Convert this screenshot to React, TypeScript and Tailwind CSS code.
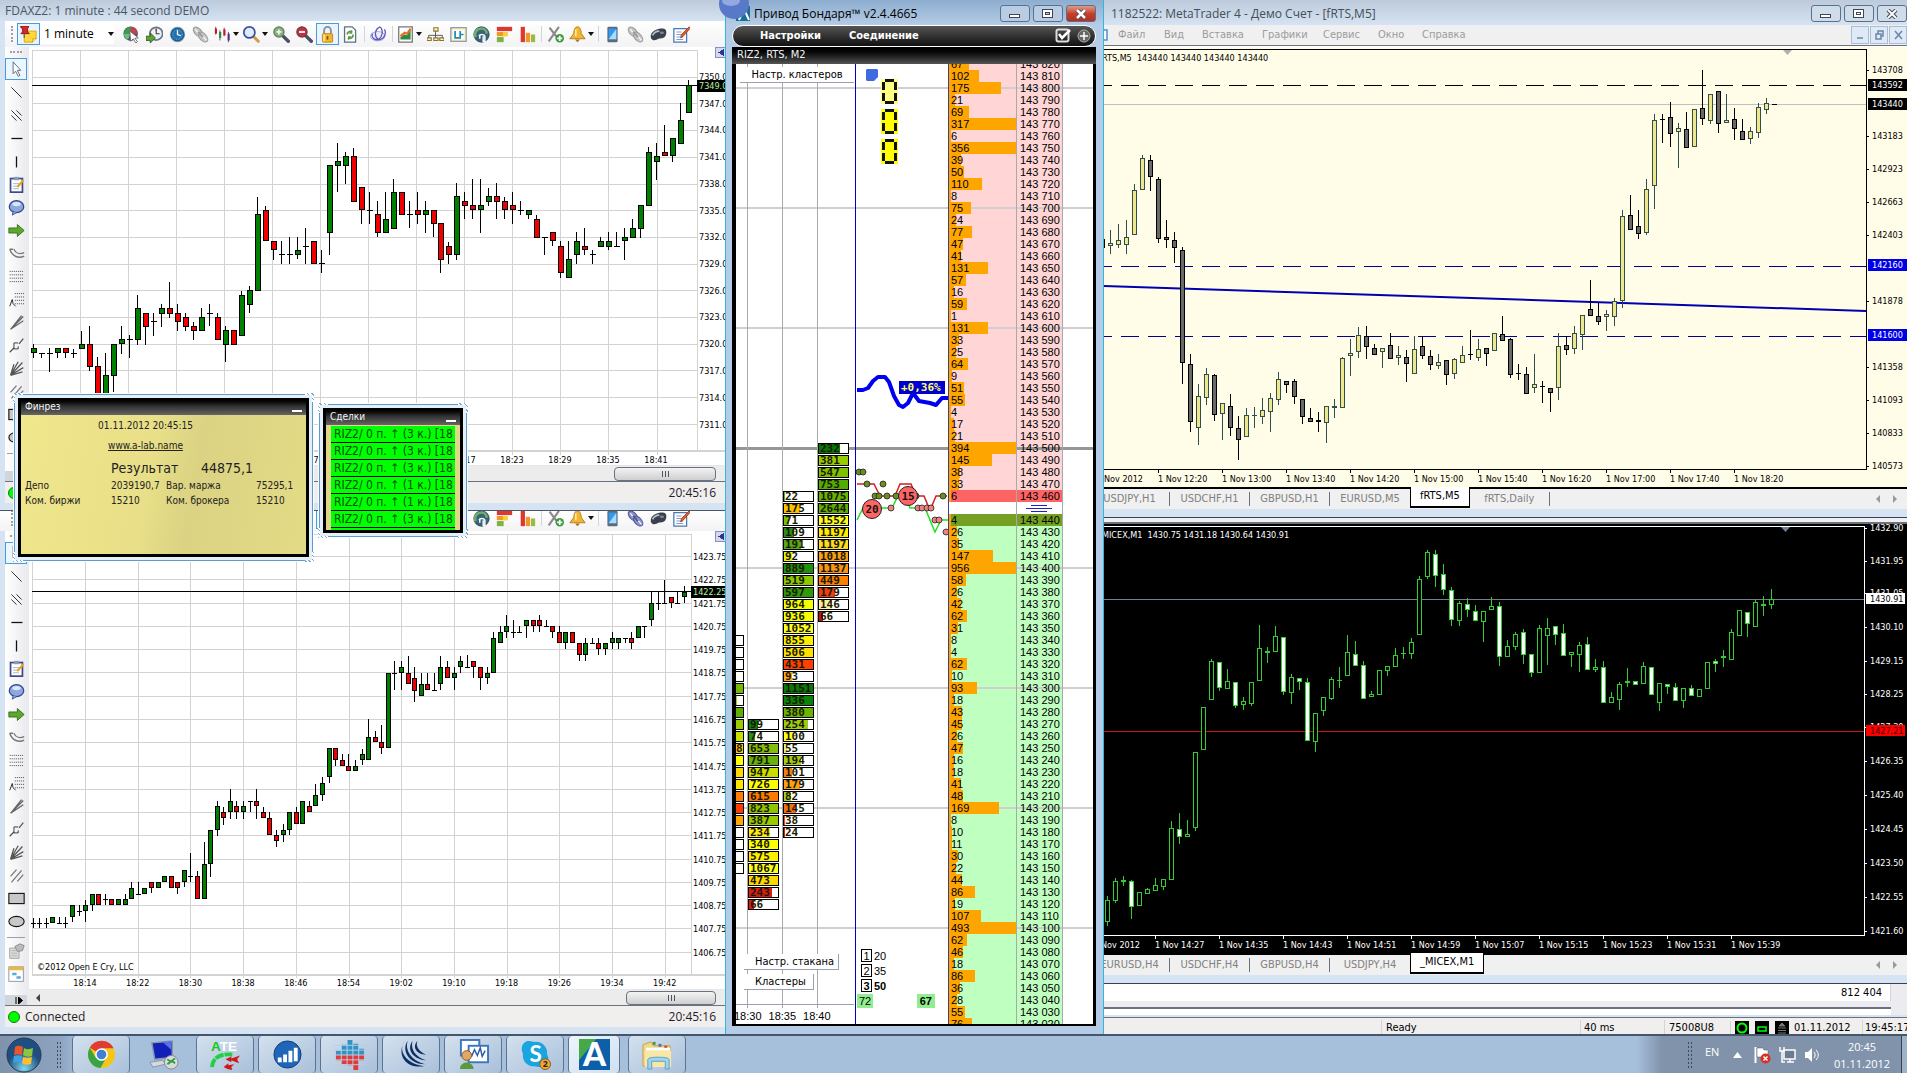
import React from 'react';

const TAHOMA = "font-['DejaVu_Sans_Condensed','Liberation_Sans',sans-serif]";
const SEGOE = "font-['Open_Sans','Noto_Sans',sans-serif]";

/* ---------- chart data: "kind high top bottom low" ---------- */

const daxCandles = `g 344 348 353 358,k 353 353 353 358,k 348 353 353 372,g 348 348 353 358,r 348 348 353 358,k 349 353 353 358,g 331 344 349 349,r 326 344 367 371,r 357 366 399 399,g 353 375 395 399,g 344 344 376 392,g 326 339 344 354,k 335 339 339 358,g 295 308 340 345,r 313 313 327 345,k 313 321 321 336,g 304 308 314 327,r 282 308 314 318,r 304 313 322 331,r 313 317 327 331,r 322 326 331 340,g 308 317 331 331,k 304 313 313 326,r 313 317 340 340,g 326 330 345 362,r 330 330 345 345,g 291 295 336 336,g 286 290 305 313,g 197 214 291 291,r 206 210 241 241,r 241 241 250 260,k 241 254 254 264,k 237 254 254 264,g 237 250 255 259,k 228 246 246 264,r 241 241 264 264,k 250 263 263 273,g 165 165 233 255,g 143 161 166 192,g 152 156 166 184,r 148 156 202 202,r 187 187 210 224,k 192 210 210 224,r 201 214 233 237,g 192 219 233 233,g 179 192 229 229,r 192 192 215 215,k 201 214 214 228,r 192 210 215 224,g 201 210 215 233,r 210 210 224 237,r 223 223 260 273,r 242 246 255 264,g 183 196 255 260,r 192 201 206 219,r 179 205 210 219,g 179 205 210 233,g 188 196 202 206,r 183 196 202 219,r 197 201 210 219,r 192 205 210 224,k 201 210 210 215,g 210 210 215 219,r 215 219 238 238,k 237 237 237 255,r 232 232 241 246,r 241 246 273 278,g 241 259 278 278,g 232 241 255 264,r 228 246 250 255,k 250 254 254 264,g 237 241 247 247,g 232 241 247 250,k 232 246 246 246,g 228 237 241 260,g 219 228 238 238,g 205 205 229 238,g 147 152 206 206,g 143 156 162 180,r 125 152 156 156,g 138 138 156 162,g 103 120 144 144,g 80 85 113 113`;

const spCandles = `k 918 923 923 928,k 918 923 923 928,k 918 923 923 928,g 917 917 923 923,k 917 923 923 923,k 917 923 923 928,g 905 905 917 922,k 905 911 911 916,g 900 905 911 922,g 894 894 905 911,r 894 894 905 905,k 894 899 899 905,r 899 899 905 905,g 899 899 905 905,g 894 899 905 905,g 882 888 899 899,k 882 894 894 894,g 888 888 894 894,r 882 882 888 893,g 882 882 888 888,g 876 876 882 882,r 876 876 888 888,r 882 882 888 894,g 870 870 882 887,k 853 876 876 882,r 871 876 899 899,g 842 864 899 899,g 830 830 864 877,g 801 806 830 836,r 807 812 818 825,g 789 801 812 819,r 801 806 812 819,g 801 806 812 819,k 801 801 801 812,r 789 801 806 819,r 807 812 818 818,r 812 818 835 835,r 830 835 841 847,g 824 830 835 842,g 812 812 830 835,r 807 812 824 824,g 801 801 824 824,r 801 806 812 812,g 784 795 806 806,g 777 783 795 801,g 748 748 777 783,r 748 748 760 766,r 754 760 766 766,r 754 766 771 771,g 760 766 771 771,g 749 754 760 765,g 719 737 760 760,r 731 737 742 742,r 725 742 748 754,g 673 673 748 748,k 661 673 673 690,g 661 667 673 690,r 656 673 684 684,r 667 678 691 702,g 673 684 696 696,r 673 684 690 690,k 673 690 690 690,g 656 667 684 690,r 661 667 678 678,g 667 673 678 690,g 656 661 667 673,k 655 667 667 667,r 661 661 667 678,r 667 667 678 690,g 667 673 678 684,g 632 638 673 673,g 626 632 643 643,g 615 626 632 638,k 620 632 632 638,k 626 632 632 632,g 620 620 626 638,r 620 620 626 632,r 615 620 626 632,k 620 626 626 626,r 626 626 632 638,r 626 632 643 643,g 632 632 643 649,r 632 632 643 643,r 643 643 655 661,g 638 643 655 661,k 638 643 643 643,r 638 643 649 655,g 643 643 649 655,g 632 638 643 649,g 638 638 643 649,k 638 638 638 643,r 632 638 643 649,g 626 626 638 638,k 626 626 626 638,g 592 603 620 626,k 592 603 603 610,k 580 603 603 603,r 597 597 603 608,k 592 603 603 603,g 586 592 597 603`;

const rtsCandles = `u 230 243 246 254,u 224 240 245 248,u 220 237 245 254,u 184 190 235 235,u 155 158 190 190,d 155 160 177 191,d 177 179 239 243,d 220 237 240 248,d 232 240 248 263,d 247 250 363 384,d 354 364 422 432,u 384 396 428 445,u 368 374 398 405,d 374 375 415 421,u 403 403 414 440,d 394 406 428 436,d 416 428 440 460,u 408 415 437 437,u 407 415 416 428,u 398 410 417 424,u 393 398 412 432,u 372 379 400 405,d 381 381 385 393,d 379 381 397 404,d 399 399 417 424,d 408 418 422 422,d 412 420 422 432,u 406 406 423 443,u 399 406 408 418,u 357 358 408 408,u 339 353 356 376,u 327 335 352 358,d 326 336 347 359,d 344 348 355 355,u 348 348 352 368,d 333 345 359 359,u 346 355 358 365,d 350 357 364 382,u 336 349 374 374,d 336 346 356 359,d 350 356 365 370,u 354 362 366 369,d 360 360 375 385,u 358 359 374 379,u 346 355 363 363,d 330 354 355 360,u 339 349 358 361,d 348 348 354 366,u 333 333 351 351,d 316 334 341 341,d 338 339 375 378,d 364 373 374 380,d 367 374 394 394,u 354 384 388 393,d 381 386 387 403,d 388 388 393 412,u 333 346 388 400,d 336 345 350 355,u 326 333 349 354,u 315 315 335 350,d 280 309 316 316,d 303 316 322 325,u 310 314 317 331,u 298 301 317 326,u 210 216 301 308,d 195 215 230 230,d 210 226 234 239,u 179 189 233 235,u 114 120 186 209,d 114 119 120 143,d 102 117 134 147,u 123 128 132 168,d 112 129 148 148,u 109 109 147 147,d 70 108 119 125,u 94 94 121 124,d 91 91 124 133,u 94 120 123 123,d 108 119 129 140,d 119 131 140 140,u 127 131 139 144,u 103 107 133 138,u 98 103 110 114`;

const micexCandles = `h 896 900 922 926,h 878 881 901 903,l 876 880 882 886,w 880 881 907 919,h 892 892 906 906,h 888 889 894 894,h 878 885 891 891,h 879 879 887 890,h 821 828 880 880,w 813 829 837 844,h 820 834 837 837,h 752 752 828 831,h 707 707 750 750,h 659 661 700 700,w 662 662 688 691,h 669 681 689 689,w 682 682 706 708,h 697 701 705 710,h 682 682 704 706,h 625 648 681 681,l 647 651 653 663,h 626 636 652 652,w 637 637 692 695,h 674 677 693 704,w 678 678 682 690,w 678 682 741 741,h 713 713 742 752,h 697 697 711 716,h 677 679 699 700,l 667 680 681 688,h 635 652 676 676,w 641 654 666 666,w 661 665 699 699,h 691 694 697 697,h 670 670 695 695,h 666 666 671 676,h 648 655 667 667,l 647 653 654 659,h 638 642 654 659,h 576 579 635 635,h 550 552 577 579,w 550 554 576 587,w 564 574 590 595,w 587 590 620 626,h 601 603 621 626,w 598 604 610 617,w 605 611 621 621,h 611 611 622 642,h 597 606 610 610,w 602 606 657 666,h 640 646 657 657,h 632 634 647 650,w 629 632 655 664,w 654 654 673 677,h 625 628 673 673,h 618 628 636 665,w 626 626 635 645,w 624 633 656 656,h 652 652 655 667,h 642 645 655 672,w 637 644 670 670,h 659 667 670 672,w 661 667 703 703,h 692 697 703 703,h 682 684 700 710,l 668 681 683 687,w 681 681 685 685,h 662 666 684 684,w 667 667 695 695,h 683 683 703 711,w 684 684 687 694,w 683 687 701 701,h 688 688 701 708,w 685 688 696 696,h 689 689 697 697,h 662 662 689 689,w 659 661 664 672,l 650 656 658 667,h 629 632 660 660,h 610 610 636 636,w 612 612 624 637,h 600 602 627 627,l 596 604 606 616,h 589 599 605 609`;

const palette: Record<string, { fill: string; line: string }> = {
    g: { fill: '#008000', line: '#000' },
    r: { fill: '#f00000', line: '#000' },
    k: { fill: '#000', line: '#000' },
    u: { fill: '#f0e68c', line: '#2f4f4f' },
    d: { fill: '#696969', line: '#000' },
    h: { fill: '#000', line: '#32cd32' },
    w: { fill: '#fff', line: '#32cd32' },
    l: { fill: '#00ff00', line: '#32cd32' },
};

const Candles: React.FC<{ data: string; x0: number; step: number; width: number }> = ({ data, x0, step, width }) => (
    <g strokeWidth={1}>
        {data.split(',').map((row, i) => {
            const [kind, ...nums] = row.split(' ');
            const [high, top, bottom, low] = nums.map(Number);
            const x = Math.round(x0 + step * i) + 0.5;
            const c = palette[kind];
            return (
                <g key={i} stroke={c.line}>
                    <line x1={x} x2={x} y1={high} y2={low} />
                    <rect x={x - width / 2} y={top + 0.5} width={width} height={Math.max(bottom - top - 1, 0.01)} fill={c.fill} />
                </g>
            );
        })}
    </g>
);

/* ---------- toolbar icons ---------- */

const Svg: React.FC<{ children: React.ReactNode; size?: number }> = ({ children, size = 17 }) => (
    <svg width={size} height={size} viewBox="0 0 20 20" fill="none" className="shrink-0">{children}</svg>
);

const chain = (fill: string, stroke: string) => (
    <g fill={fill} stroke={stroke} strokeWidth="1.2">
        <ellipse cx="7" cy="7" rx="7" ry="4" transform="rotate(48 7 7)" />
        <ellipse cx="13" cy="13" rx="7" ry="4" transform="rotate(48 13 13)" />
        <path d="M4 4l4 5M12 11l5 6" stroke="#fff" />
        <path d="M7 7l6 6" strokeWidth="2" />
    </g>
);

const toolIcons: Record<string, React.ReactNode> = {
    note: <><path d="M5 6h14v9l-4 4H5z" fill="#ffd93b" stroke="#d9a400" /><path d="M15 19v-4h4" fill="#fff3a8" stroke="#c99700" /><path d="M1 0h9v2L9 3v4l2 2H1l2-2V3L1 2z" fill="#d8262a" stroke="#7e1113" /><path d="M5 9v5" stroke="#666" strokeWidth="1.500" /></>,
    pie: <><circle cx="9" cy="9" r="8.500" fill="#4a4f78" /><path d="M9 9V1a8 8 0 0 1 8 8z" fill="#c8404a" /><path d="M9 9H1a8 8 0 0 1 8-8z" fill="#3f9a52" /><path d="M9 9H1a8 8 0 0 0 5 7z" fill="#6cc070" /><path d="M8 6l10 8-4 .5 3 4-2 1.500-3-5-3 3z" fill="#fff" stroke="#666" /></>,
    clockIn: <><circle cx="12" cy="9" r="7.500" fill="#eef2f6" stroke="#66788c" strokeWidth="2" /><path d="M12 3v6h4" stroke="#333" strokeWidth="1.200" /><path d="M12 4v2" stroke="#c33" strokeWidth="2" /><path d="M0 12h5V8l6 6-6 6v-3H0z" fill="#5f9f3a" stroke="#2c5a12" /></>,
    clock: <><circle cx="10" cy="10" r="9" fill="#7d9cb8" /><circle cx="10" cy="10" r="7.500" fill="#1f72ae" stroke="#1b4e78" /><circle cx="10" cy="10" r="5.500" stroke="#9fc8e6" strokeDasharray="1 2" /><path d="M10 5v5l4 1.500" stroke="#fff" strokeWidth="1.500" /></>,
    link: chain('#c6c6c6', '#9a9a9a'),
    linkBlue: chain('#8c94c8', '#4c5498'),
    candles: <><path d="M2 1v9M7 5v12M12 2v10M17 7v12" stroke="#444" /><path d="M1 3h2.500v6H1z" fill="#d0102a" /><path d="M6 7h2.500v7H6z" fill="#1d8a3c" /><path d="M11 4h2.500v7H11z" fill="#d0102a" /><path d="M16 9h2.500v8H16z" fill="#5a2a90" /></>,
    zoom: <><path d="M12 12l6 6" stroke="#d29a3c" strokeWidth="3.500" strokeLinecap="round" /><circle cx="7.500" cy="7.500" r="6.500" fill="#dcecfb" stroke="#3a4fa0" strokeWidth="2" /></>,
    zoomIn: <><path d="M11 11l7 7" stroke="#4a4f62" strokeWidth="4" strokeLinecap="round" /><circle cx="7" cy="7" r="6" fill="#86b47e" stroke="#6a7a6a" strokeWidth="1.500" /><path d="M4 7h6M7 4v6" stroke="#e8f5e4" strokeWidth="2" /></>,
    zoomOut: <><path d="M11 11l7 7" stroke="#4a4f62" strokeWidth="4" strokeLinecap="round" /><circle cx="7" cy="7" r="6" fill="#c03040" stroke="#7a3a44" strokeWidth="1.500" /><path d="M3.500 7h7" stroke="#fbe4e4" strokeWidth="2.500" /></>,
    lock: <><path d="M6 9V5a4 4 0 0 1 8 0v4" stroke="#8a8fa0" strokeWidth="2.200" /><rect x="4" y="9" width="12" height="10" rx="1" fill="#f7b52c" stroke="#b97b12" /><path d="M6 10v8" stroke="#ffe59a" strokeWidth="2" /><path d="M10 12v4" stroke="#7a5208" strokeWidth="2" /></>,
    refresh: <><path d="M3 1h9l4 4v14H3z" fill="#fff" stroke="#5c7088" strokeWidth="1.500" /><path d="M6 10a4 4 0 0 1 6-3M13 10a4 4 0 0 1-6 4" stroke="#5a9a3a" strokeWidth="2" /><path d="M12 4v5H8zM7 17v-5h4z" fill="#5a9a3a" /></>,
    swirl: <><ellipse cx="9" cy="12" rx="8.500" ry="5.500" fill="#ececfa" stroke="#9a9ad8" /><path d="M12 1C6 3 4 12 10 16M12 1c4 4 3 11-2 15M17 4c3 5-1 12-7 12M3 9c-2 4 2 8 7 7" stroke="#5a5ab8" strokeWidth="1.500" /></>,
    report: <><path d="M2 1h16v18H2z" fill="#fff" stroke="#777" strokeWidth="1.500" /><path d="M4 16v-3l5-3 3 1 4-8v13z" fill="#2f8a3c" /><path d="M4 12l5-4 3 1 4-6" stroke="#e0702a" strokeWidth="2.500" /></>,
    tree: <><path d="M10 6v8M2 14v-3h16v3" stroke="#444" /><path d="M8 2h5v4H8zM0 14h5v3H0zM8 14h5v3H8zM15 14h5v3h-5z" fill="#fff3c8" stroke="#8a7430" strokeWidth="1.300" /></>,
    layout: <><rect x="1" y="2" width="18" height="16" fill="#fff3c0" stroke="#8a98ac" strokeWidth="1.500" /><path d="M3.500 5v10h13V5z" fill="#fff" /><path d="M6 6v8h6V6M12 10h4" stroke="#1f88b8" strokeWidth="2" /></>,
    headset: <><circle cx="10" cy="10" r="9" fill="#37647a" stroke="#26405f" /><path d="M3 13c-2-6 2-10 7-10 4 0 6 3 6 6" stroke="#6fae6a" strokeWidth="3" /><path d="M7 12a4 4 0 0 1 7 0v6h-2v-6M8 10v5" stroke="#fff" strokeWidth="1.700" /></>,
    barsH: <><path d="M1 1h18v5H1z" fill="#dc3830" /><path d="M1 7h12v5H1z" fill="#f0962a" /><path d="M8 7h6v5H8z" fill="#f4d03c" /><path d="M1 13h8v6H1z" fill="#7cb342" /></>,
    barsV: <><path d="M2 1h5v18H2z" fill="#dc3830" /><path d="M8 8h5v11H8z" fill="#f0962a" /><path d="M14 10h5v9h-5z" fill="#9cba3c" /></>,
    tools: <><path d="M3 2l10 13M14 1L2 18" stroke="#8a8a8a" strokeWidth="2.500" /><circle cx="15" cy="14.500" r="5" fill="#3a9a3a" /><path d="M12 14.500h6M15 11.500v6" stroke="#fff" strokeWidth="2" /></>,
    bell: <><path d="M10 1c3 0 4 3 4.500 8l4.500 6H1l4.500-6C6 4 7 1 10 1z" fill="#f7b52c" stroke="#a8741a" /><path d="M8 4v8" stroke="#ffe7a8" strokeWidth="2" /><path d="M7 16h6l-3 3z" fill="#a8741a" /></>,
    phone: <><rect x="4" y="1" width="12" height="18" rx="1.500" fill="#5c6a7c" /><path d="M5.500 3h9v12.500h-9z" fill="#2f9af0" /><path d="M5.500 15.500l9-12v12z" fill="#a8dcff" /></>,
    mask: <><path d="M1 14C0 6 8 3 15 3c5 0 5 6 3 9-2 3-5 2-8 3-3 2-7 3-9-1z" fill="#3a414c" /><path d="M3 11c2-4 5-5 8-5" stroke="#b8c2ce" strokeWidth="2" /><ellipse cx="14" cy="8" rx="2.500" ry="1.500" fill="#7a8696" /></>,
    edit: <><path d="M1 3h15v16H1z" fill="#fff" stroke="#4a78b0" strokeWidth="1.500" /><path d="M4 7h6M4 10h7M4 13h8M4 16h8" stroke="#7f9cc8" strokeWidth="1.200" /><path d="M19 1l-9 9-1 4 3-2 8-9z" fill="#e85a2a" stroke="#a04018" /></>,
};

// '|' is a separator, '*' marks a pressed button, '+' adds a drop-down arrow
const toolLayout = ['pie', 'clockIn', 'clock', 'link', 'candles+', 'zoom+', 'zoomIn', 'zoomOut', 'lock*', 'refresh', '|', 'swirl', '|', 'report+', 'tree', 'layout', 'headset', 'barsH', 'barsV', '|', 'tools', 'bell+', '|', 'phone', 'link', 'mask', 'edit'];

const Caret = () => <svg width="6" height="4" className="ml-0.5 shrink-0"><path d="M0 0h6L3 4z" fill="#111" /></svg>;

const Toolbar: React.FC<{ linked?: boolean }> = ({ linked }) => (
    <div className="flex h-[26px] shrink-0 items-center pl-1.5">
        <span className="mr-1 h-4 border-l-2 border-dotted border-gray-400" />
        <button aria-label="note" className="flex h-[22px] w-[23px] items-center justify-center border border-[#4a9ae0] bg-[#eaf4fd]"><Svg>{toolIcons.note}</Svg></button>
        <label className="flex h-5 w-[74px] items-center justify-between bg-white pl-1">
            <select aria-label="interval" className={`appearance-none bg-transparent text-[12px] outline-none ${SEGOE}`}><option>1 minute</option></select>
            <Caret />
        </label>
        <div className="ml-1.5 flex items-center">
            {toolLayout.map((item, i) => {
                if (item === '|') return <span key={i} className="mx-0.5 h-4 w-px bg-gray-300" />;
                const name = item.replace(/[*+]/, '');
                const icon = linked && name === 'link' && i > 20 ? 'linkBlue' : name;
                return (
                    <button key={i} aria-label={name} className={`flex h-[22px] items-center justify-center ${item.endsWith('*') ? 'w-[23px] border border-[#4a9ae0] bg-[#eaf4fd]' : item.endsWith('+') ? 'w-[29px]' : 'w-[23px]'}`}>
                        <Svg>{toolIcons[icon]}</Svg>
                        {item.endsWith('+') && <Caret />}
                    </button>
                );
            })}
        </div>
    </div>
);

const sideIcons: [string, React.ReactNode][] = [
    ['cursor', <path d="M6 1v14l3-3 3 6 2-1-3-6h4z" fill="#fff" stroke="#4a5a70" />],
    ['line', <path d="M4 4l12 12" stroke="#111" />],
    ['channel', <path d="M4 4l12 12M10 4l6 6M4 10l6 6" stroke="#111" />],
    ['horizontal', <path d="M4 10h13" stroke="#111" strokeWidth="1.500" />],
    ['vertical', <path d="M10 4v13" stroke="#111" strokeWidth="1.500" />],
    ['clipboard', <><rect x="3" y="3" width="14" height="16" fill="#fff" stroke="#3a4a8a" strokeWidth="2" /><path d="M7 1h6v4H7z" fill="#8a9ab5" /><path d="M6 9h7M6 12h7M6 15h7" stroke="#9ab" /><path d="M18 5l-7 8" stroke="#e8a020" strokeWidth="2.500" /></>],
    ['comment', <><ellipse cx="10" cy="9" rx="8.500" ry="7" fill="#8fa8dc" stroke="#2b4a96" strokeWidth="1.500" /><path d="M6 15l-1 4 5-3" fill="#8fa8dc" stroke="#2b4a96" /><ellipse cx="10" cy="6" rx="5" ry="2.500" fill="#dbe6fa" /></>],
    ['arrow', <path d="M1 7h10V3l8 7-8 7v-4H1z" fill="#5fa62e" stroke="#2e6a10" />],
    ['arcs', <path d="M2 5c3 9 11 11 17 8M7 5c2 5 7 6 12 4M2 5h4" stroke="#777" strokeWidth="1.700" />],
    ['levels', <path d="M2 4h16M2 8h16M2 12h16M2 16h16" stroke="#333" strokeDasharray="1.200 1.200" />],
    ['levelsA', <><path d="M8 3h11M8 7h11M8 11h11M8 15h11" stroke="#333" strokeDasharray="1.200 1.200" /><path d="M2 18l3-8 1 5 3 3" stroke="#111" /></>],
    ['fan', <path d="M3 18L16 2M3 18L18 8M3 18L18 3" stroke="#666" strokeWidth="1.500" />],
    ['gann', <><path d="M2 18l5-5M13 8l5-6" stroke="#555" strokeWidth="1.500" /><path d="M12 7H7v7h5v-3" stroke="#222" /></>],
    ['fan2', <path d="M3 18L17 3M3 18L12 2M3 18L18 9M3 18L7 5M3 18l14-4" stroke="#555" strokeWidth="1.500" />],
    ['hatch', <path d="M3 11l7-8M4 18L16 4M11 17l7-8" stroke="#777" strokeWidth="1.500" />],
    ['rectangle', <rect x="1" y="4" width="18" height="12" fill="#c8c8c8" stroke="#111" strokeWidth="1.300" />],
    ['ellipse', <ellipse cx="10" cy="10" rx="9" ry="6" fill="#c8c8c8" stroke="#111" strokeWidth="1.300" />],
];

const Sidebar: React.FC<{ extra?: boolean }> = ({ extra }) => (
    <div className="flex w-6 shrink-0 flex-col items-center overflow-hidden bg-gradient-to-r from-white to-[#e9e9ee] pr-0.5">
        <span className="mt-1 mb-[5px] w-3 border-t-2 border-dotted border-gray-400" />
        {sideIcons.map(([name, icon], i) => (
            <button key={name} aria-label={name} className={`mb-px flex h-[22px] w-[22px] shrink-0 items-center justify-center ${i === 0 ? 'border border-[#4a9ae0] bg-[#eef6fd]' : ''}`}><Svg>{icon}</Svg></button>
        ))}
        <span className="mt-1 h-px w-[18px] shrink-0 bg-gray-400" />
        {extra && (
            <>
                <button aria-label="properties" className="mt-0.5 flex h-[23px] shrink-0 items-center"><Svg><path d="M2 6h11v12H2z" fill="#ddd" stroke="#999" /><path d="M8 4l6-3 5 2-2 6-6 1z" fill="#bbb" stroke="#888" /><path d="M4 9h6M4 12h7M4 15h7" stroke="#aaa" /></Svg></button>
                <button aria-label="objects" className="flex h-[23px] shrink-0 items-center"><Svg><rect x="1" y="1" width="17" height="17" fill="#fff" stroke="#889" /><path d="M1 1h17v4H1z" fill="#e8b93c" /><path d="M5 8h5v3H5zM10 12h5v3h-5z" fill="#59a8d8" /></Svg></button>
            </>
        )}
        <span className="mt-auto flex h-[10px] w-full shrink-0 items-center justify-end bg-gray-300 pr-1"><svg width="8" height="7"><path d="M1 0v7M3.500 0l4 3.500-4 3.500z" stroke="#000" fill="#000" /></svg></span>
    </div>
);

const ScrollBar: React.FC<{ thumb: string }> = ({ thumb }) => (
    <div className="flex h-4 items-center border-t border-gray-200 bg-[#ececec] pr-[9px]">
        <svg width="6" height="8" className="ml-1.5"><path d="M5 0v8L1 4z" fill="#444" /></svg>
        <div className={`ml-auto flex h-3.5 items-center justify-center gap-0.5 rounded-sm border border-gray-500 bg-gradient-to-b from-[#f3f3f3] to-[#cfcfcf] ${thumb}`}>
            <i className="h-1.5 w-px bg-gray-600" /><i className="h-1.5 w-px bg-gray-600" /><i className="h-1.5 w-px bg-gray-600" />
        </div>
    </div>
);

const StatusBar: React.FC = () => (
    <div className={`flex h-[22px] shrink-0 items-center border-t border-gray-500 bg-[#f1eeee] pr-[9px] pl-0.5 text-[12px] text-[#1e1e28] ${SEGOE}`}>
        <svg width="14" height="14" className="mr-1"><circle cx="7" cy="7" r="5.500" fill="#0f0" stroke="#087a08" /></svg>
        <span>Connected</span>
        <span className="ml-auto">20:45:16</span>
    </div>
);

/* ---------- left charts ---------- */

const range = (n: number) => Array.from({ length: n }, (_, i) => i);

const FlagButton: React.FC<{ y: number }> = ({ y }) => (
    <g><rect x="715.500" y={y + 0.5} width="13" height="10" fill="#d5d8ee" stroke="#8a90b8" /><path d={`M724 ${y + 2}l-6 3.500 6 3.500z`} fill="#2a3590" /></g>
);

const DaxChart = () => (
    <svg width="697" height="418" viewBox="29 47 697 418" className={`shrink-0 text-[9px] ${TAHOMA}`} shapeRendering="crispEdges">
        <rect x="29" y="47" width="697" height="418" fill="#fff" />
        <g stroke="#d3d3d3">
            {range(14).map(i => <line key={i} x1={32.5 + Math.round(48.04 * i)} x2={32.5 + Math.round(48.04 * i)} y1="50" y2="455" />)}
            {range(15).map(i => <line key={i} x1="32" x2="697" y1={50.5 + Math.round(26.7 * i)} y2={50.5 + Math.round(26.7 * i)} />)}
            <line x1="697.500" x2="697.500" y1="50" y2="451" />
            <line x1="32" x2="726" y1="451" y2="451" strokeWidth="2" />
        </g>
        <Candles data={daxCandles} x0={33} step={7.99} width={5} />
        <line x1="32" x2="697" y1="85.500" y2="85.500" stroke="#000" />
        {range(12).map(i => <text key={i} x="699" y={80 + Math.round(26.72 * i)}>{(7350 - 3 * i).toFixed(1)}</text>)}
        <text x="699" y="401">7314.0</text>
        <text x="699" y="428">7311.0</text>
        <rect x="697" y="80" width="29" height="12" fill="#000" />
        <text x="699" y="89" fill="#b8f0a0">7349.0</text>
        {['17:29', '17:35', '17:41', '17:47', '17:53', '17:59', '18:05', '18:11', '18:17', '18:23', '18:29', '18:35', '18:41'].map((t, i) => (
            <text key={t} x={80 + 48 * i} y="463" textAnchor="middle">{t}</text>
        ))}
        <FlagButton y={47} />
    </svg>
);

const SpChart = () => (
    <svg width="697" height="458" viewBox="29 531 697 458" className={`shrink-0 text-[9px] ${TAHOMA}`} shapeRendering="crispEdges">
        <rect x="29" y="531" width="697" height="458" fill="#fff" />
        <g stroke="#d3d3d3">
            <line x1="32.500" x2="32.500" y1="534" y2="975" />
            {range(12).map(i => <line key={i} x1={85.5 + Math.round(52.7 * i)} x2={85.5 + Math.round(52.7 * i)} y1="534" y2="978" />)}
            <line x1="32" x2="691" y1="534.500" y2="534.500" />
            {range(18).map(i => <line key={i} x1="32" x2="691" y1={556.5 + Math.round(23.28 * i)} y2={556.5 + Math.round(23.28 * i)} />)}
            <line x1="691.500" x2="691.500" y1="534" y2="975" />
            <line x1="32" x2="726" y1="975" y2="975" strokeWidth="2" />
        </g>
        <Candles data={spCandles} x0={32.5} step={6.58} width={4} />
        <line x1="32" x2="691" y1="591.500" y2="591.500" stroke="#000" />
        {range(18).map(i => <text key={i} x="693" y={560 + Math.round(23.28 * i)}>{(1423.75 - i).toFixed(2)}</text>)}
        <rect x="691" y="586" width="35" height="12" fill="#000" />
        <text x="693" y="595" fill="#b8f0a0">1422.25</text>
        {['18:14', '18:22', '18:30', '18:38', '18:46', '18:54', '19:02', '19:10', '19:18', '19:26', '19:34', '19:42'].map((t, i) => (
            <text key={t} x={85 + 52.7 * i} y="986" textAnchor="middle">{t}</text>
        ))}
        <text x="37" y="970">©2012 Open E Cry, LLC</text>
        <FlagButton y={531} />
    </svg>
);

const ChartWindow: React.FC<{ title?: string; thumb: string; children: React.ReactNode }> = ({ title, thumb, children }) => (
    <section className="flex flex-col bg-[#d6e3f2] pl-[5px]">
        {title && <h2 className={`-ml-[5px] flex h-[21px] items-center bg-gradient-to-b from-[#bccadb] to-[#d6e3f2] pl-[5px] text-[12px] text-[#4c5763] ${SEGOE}`}>{title}</h2>}
        <div className={`flex shrink-0 items-end overflow-hidden bg-gradient-to-b from-white to-[#f3f3f5] ${title ? 'h-[26px]' : '-ml-[5px] h-[21px] border-t border-gray-600 pl-[5px]'}`}>
            <Toolbar linked={!title} />
        </div>
        <div className="flex">
            <Sidebar extra={!title} />
            <div className="flex min-w-0 flex-1 flex-col overflow-hidden">
                {children}
                <ScrollBar thumb={thumb} />
            </div>
        </div>
        <StatusBar />
        <div className="h-[7px]" />
    </section>
);

/* ---------- floating windows ---------- */

const HatchFrame: React.FC<{ className: string; title: string; children: React.ReactNode }> = ({ className, title, children }) => (
    <section className={`absolute bg-[repeating-linear-gradient(45deg,#7fa9cb_0_1px,#fff_1px_3px)] p-[5px] ${className}`}>
        <div className="absolute inset-x-2.5 inset-y-0 border-y border-white bg-[#5b9bd0]" />
        <div className="absolute inset-x-0 inset-y-2.5 border-x border-white bg-[#5b9bd0]" />
        <div className="relative flex h-full flex-col border-[3px] border-t-0 border-black bg-[#dfd78a] shadow-[0_0_0_3px_#e4eff8]">
            <h3 className={`-mx-[3px] flex h-[17px] shrink-0 items-center justify-between border-x-[3px] border-black bg-gradient-to-b from-black via-[#333] to-[#666] px-1 text-[10px] text-gray-100 ${TAHOMA}`}>
                {title}
                <button aria-label="minimize" className="mt-2 h-0.5 w-2.5 bg-white" />
            </h3>
            {children}
        </div>
    </section>
);

const FinResult = () => (
    <HatchFrame className="top-[393px] left-[13px] h-[169px] w-[301px]" title="Финрез">
        <div className={`flex-1 bg-[linear-gradient(100deg,#f0e68c_0%,#e8df88_45%,#dbd283_60%,#e4db86_100%)] px-1 pt-[3px] text-[10px] text-[#222] ${TAHOMA}`}>
            <p className="mr-9 text-center leading-4">01.11.2012 20:45:15</p>
            <p className="mr-9 pt-1 text-center leading-4"><a href="#lab" className="underline">www.a-lab.name</a></p>
            <p className="mt-1 flex pl-[86px] text-[14px] leading-5"><span className="w-[90px]">Результат</span><span>44875,1</span></p>
            <dl className="grid grid-cols-[86px_55px_90px_1fr] leading-[15px]">
                <dt>Депо</dt><dd>2039190,7</dd><dt>Вар. маржа</dt><dd>75295,1</dd>
                <dt>Ком. биржи</dt><dd>15210</dd><dt>Ком. брокера</dt><dd>15210</dd>
            </dl>
        </div>
    </HatchFrame>
);

const Deals = () => (
    <HatchFrame className="top-[403px] left-[318px] h-[135px] w-[150px]" title="Сделки">
        <ul className={`mx-[5px] mt-px flex-1 overflow-hidden bg-[#00ff00] text-[12px] text-[#034a03] ${TAHOMA}`}>
            {[3, 3, 3, 1, 1, 3].map((n, i) => (
                <li key={i} className="h-[17px] border-b border-black pl-[3px] leading-4 whitespace-nowrap">RIZ2/ 0 п. ↑ ({n} к.) [18</li>
            ))}
        </ul>
    </HatchFrame>
);

/* ---------- order book ---------- */

const volumes = [67, 102, 175, 21, 69, 317, 6, 356, 39, 50, 110, 8, 75, 24, 77, 47, 41, 131, 57, 16, 59, 1, 131, 33, 25, 64, 9, 51, 55, 4, 17, 21, 394, 145, 38, 33, 6, 0, 4, 26, 35, 147, 956, 58, 26, 42, 62, 31, 8, 4, 62, 10, 93, 18, 43, 45, 26, 47, 16, 18, 41, 48, 169, 8, 10, 11, 30, 22, 44, 86, 19, 107, 493, 62, 46, 18, 86, 36, 28, 55, 76];

type Cell = [value: string, color: string, fill?: number];

// each cluster column: top price and its cells going down by 10
const clusters: { top: number; cells: Cell[] }[] = [
    {
        top: 143340,
        cells: [['', '#fff'], ['', '#fff'], ['', '#fff'], ['', '#fff'], ['', '#76b900'], ['', '#9acd32', 20], ['', '#5fae00'], ['', '#9ccc00'], ['', '#c8e000'], ['8', '#ffc400'], ['', '#ffff00'], ['', '#ffd800'], ['', '#ffe600'], ['', '#ff8000'], ['', '#ff3c00'], ['', '#ffa800'], ['', '#fff'], ['', '#fff'], ['', '#fff'], ['', '#fff']],
    },
    {
        top: 143270,
        cells: [['99', '#0c7c0c', 30], ['74', '#2c9010', 20], ['653', '#84bd0c'], ['791', '#68b00c'], ['947', '#c8de00'], ['726', '#ffff00'], ['615', '#ff7800'], ['823', '#90c400'], ['387', '#98cc00'], ['234', '#ffe818', 74], ['340', '#ffff00'], ['575', '#ffee00'], ['1067', '#ffff20'], ['473', '#ffd800'], ['243', '#dc1c14', 78], ['66', '#dc1c14', 16]],
    },
    {
        top: 143460,
        cells: [['22', '#4caf50', 4], ['175', '#ffc000', 56], ['71', '#7cbf00', 16], ['109', '#2c8c1c', 34], ['191', '#58a818', 60], ['92', '#e4f400', 26], ['889', '#209010'], ['519', '#8cc800'], ['597', '#30980c'], ['964', '#f4ff00'], ['936', '#f4ff00'], ['1052', '#ffff20'], ['855', '#ffee00'], ['506', '#ffe000'], ['431', '#ff4000'], ['93', '#ffa818', 26], ['1151', '#087808'], ['336', '#088408'], ['380', '#6cb400'], ['254', '#a0cc10', 82], ['100', '#ffff20', 30], ['55', '#e8f080', 12], ['194', '#a8cc10', 60], ['101', '#f48018', 28], ['179', '#ffa010', 56], ['82', '#a8d028', 24], ['145', '#f47010', 42], ['38', '#ff4020', 5], ['24', '#dc1c14', 3]],
    },
    {
        top: 143500,
        cells: [['232', '#087808', 72], ['381', '#98cc00'], ['547', '#80c000'], ['753', '#54ac00'], ['1075', '#68b400'], ['2644', '#60b000'], ['1552', '#ffff20'], ['1197', '#ffec00'], ['1197', '#ffdc20'], ['1018', '#ffa010'], ['1137', '#ff9410'], ['449', '#ff8000'], ['179', '#f03c10', 56], ['146', '#fff0a0', 44], ['66', '#c80c0c', 14]],
    },
];

const Cluster: React.FC<{ col: number; price: number }> = ({ col, price }) => {
    const cell = clusters[col].cells[(clusters[col].top - price) / 10];
    if (!cell) return null;
    const [value, color, fill = 100] = cell;
    return (
        <div
            className={`flex h-[11px] items-center overflow-hidden border border-black font-['DejaVu_Sans_Mono',monospace] text-[11px] leading-none font-bold text-[#1a1a00] ${col === 0 ? 'w-2 border-l-0' : 'w-[31px] pl-px'}`}
            style={{ background: `linear-gradient(90deg, ${color} ${fill}%, #fff ${fill}%)` }}
        >
            {value}
        </div>
    );
};

const LINE = 'bg-[linear-gradient(transparent_5px,#cfcfcf_5px,#cfcfcf_7px,transparent_7px)]';
const THICK = 'bg-[linear-gradient(transparent_5px,#969696_5px,#969696_8px,transparent_8px)]';

const BookRow: React.FC<{ price: number; volume: number }> = ({ price, volume }) => {
    const rule = price === 143500 ? THICK : price % 100 === 0 ? LINE : '';
    const side = price === 143460 ? 'bg-[#ff6464]' : price === 143440 ? 'bg-[#76a024]' : price === 143450 ? 'bg-white' : price > 143450 ? 'bg-[#ffd5d5]' : 'bg-[#bfffbf]';
    const label = `${Math.floor(price / 1000)} ${String(price % 1000).padStart(3, '0')}`;
    return (
        <tr className="h-3">
            <td className={`border-r border-[#a9a9a9] p-0 ${rule}`}><Cluster col={0} price={price} /></td>
            <td className={`border-r border-[#a9a9a9] p-0 ${rule}`}><Cluster col={1} price={price} /></td>
            <td className={`border-r border-[#a9a9a9] p-0 ${rule}`}><Cluster col={2} price={price} /></td>
            <td className={`border-r border-[#0000c0] p-0 ${rule}`}><Cluster col={3} price={price} /></td>
            <td className={`border-r border-[#3c3c96] p-0 ${rule}`} />
            <td className={`border-r border-[#a9a9a9] p-0 ${side} ${rule}`}>
                {volume > 0 && (
                    <div className="flex h-3 items-center bg-[#ffa500] pl-0.5 leading-none whitespace-nowrap" style={{ width: price === 143460 || price === 143440 ? 0 : Math.max(Math.min(67, Math.round(volume * 0.297)), 1) }}>{volume}</div>
                )}
            </td>
            <td className={`border-r border-[#a9a9a9] p-0 pl-[3px] leading-none ${side} ${rule}`}>
                {price === 143450 ? <svg width="26" height="7" className="ml-1.5 block"><path d="M5 .5h16M0 3.500h26M5 6.500h16" stroke="#2020c8" /></svg> : label}
            </td>
            <td className={`p-0 ${rule}`} />
        </tr>
    );
};

const zeroDigit = (y: number, fill: string) => (
    <g key={y}>
        <rect x="882" y={y} width="17" height="25" fill={fill} />
        <path d={`M886 ${y + 1.5}h9M886 ${y + 23.5}h9M884.500 ${y + 3}v8M884.500 ${y + 14}v8M896.500 ${y + 3}v8M896.500 ${y + 14}v8`} stroke="#111" strokeWidth="3" />
    </g>
);

const dots = (points: number[][], fill: string) => points.map(([x, y]) => <circle key={`${x}-${y}`} cx={x} cy={y} r="3" fill={fill} stroke="#222" strokeWidth=".8" />);

const TickChart = () => (
    <svg width="92" height="960" viewBox="857 64 92 960" fill="none" className="absolute top-0 left-[120px]">
        <path d="M867 70l1-1h10l1 1v7l-4 4h-7l-1-1z" fill="#4169e1" />
        {zeroDigit(79, '#ffff80')}{zeroDigit(109, '#ffff00')}{zeroDigit(139, '#ffff00')}
        <path d="M858 390h6l5-2 5-7 5-4h7l4 5 5 14 5 9 4 2 5-4 5-10 6 8 11 2 6 2 6-7h7" stroke="#0000f0" strokeWidth="4" strokeLinejoin="round" />
        <rect x="900" y="381" width="46" height="13" fill="#0000d0" />
        <text x="902" y="391" className="font-['DejaVu_Sans_Mono',monospace] text-[11px] font-bold" fill="#ffff60">+0,36%</text>
        <path d="M858 520l6-12h29l6-12h8l4 12h15l10 24 6-12h7" stroke="#20e020" strokeWidth="1.500" />
        <path d="M858 484h17l6 12h15l5-12h11l5 12h8l5 12h2l5-12h11" stroke="#d02020" strokeWidth="1.500" />
        {dots([[860, 472], [864, 472], [868, 484], [884, 484], [876, 496], [880, 496], [888, 496], [897, 496], [917, 496], [944, 496]], '#6b8e23')}
        {dots([[892, 508], [919, 508], [923, 508], [928, 508], [932, 508], [936, 520], [940, 520], [947, 532]], '#f08080')}
        <circle cx="873" cy="509" r="9.500" fill="#ff6464" stroke="#222" />
        <circle cx="909" cy="496" r="9.500" fill="#ff6464" stroke="#222" />
        <g className="font-['DejaVu_Sans_Mono',monospace] text-[11px] font-bold" fill="#111" textAnchor="middle">
            <text x="873" y="513">20</text>
            <text x="909" y="500">15</text>
        </g>
    </svg>
);

const capButton = 'flex h-[17px] w-[30px] items-center justify-center rounded-[3px] border border-[#5b708c]';

const OrderBook = () => (
    <section className="relative z-10 flex w-[379px] shrink-0 flex-col border-x border-[#30b8dc] bg-[#b4cce6] text-black">
        <svg width="34" height="22" className="absolute top-0 -left-2 z-10">
            <path d="M16 6h16v15H18z" fill="#1a6f96" /><path d="M21 20l5-11 5 11" stroke="#fff" strokeWidth="2" fill="none" />
            <circle cx="16" cy="4" r="15" fill="#5878c8" /><ellipse cx="13" cy="1" rx="9" ry="5" fill="#91a8e0" />
        </svg>
        <header className={`flex h-[25px] items-center bg-gradient-to-b from-[#8eadcf] to-[#b4cce6] pr-[7px] pl-7 text-[12px] ${SEGOE}`}>
            <h2 className="flex-1 pt-0.5">Привод Бондаря™ v2.4.4665</h2>
            <div className="flex gap-[3px] pt-0.5">
                <button aria-label="minimize" className={`${capButton} bg-[#b8cde4]`}><svg width="12" height="10"><rect x=".5" y="5.500" width="10" height="3" fill="#fff" stroke="#445" /></svg></button>
                <button aria-label="maximize" className={`${capButton} bg-[#b8cde4]`}><svg width="12" height="10"><rect x=".5" y=".5" width="10" height="8" fill="#fff" stroke="#445" /><rect x="3.500" y="3.500" width="4" height="2" fill="#b8cde4" stroke="#445" /></svg></button>
                <button aria-label="close" className={`${capButton} bg-gradient-to-b from-[#dc9a8a] via-[#c8402c] to-[#b03020]`}><svg width="12" height="10"><path d="M2 1l8 8M10 1L2 9" stroke="#445" strokeWidth="4" /><path d="M2 1l8 8M10 1L2 9" stroke="#fff" strokeWidth="2.500" /></svg></button>
            </div>
        </header>
        <div className="mr-[7px] ml-1.5 flex flex-1 flex-col">
            <nav className={`flex h-[22px] shrink-0 items-center rounded-full border border-white bg-gradient-to-b from-[#555] via-[#333] to-[#111] pr-1 pl-[27px] text-[11px] font-bold text-white ${TAHOMA}`}>
                <button className="w-[89px] text-left">Настройки</button>
                <button className="text-left">Соединение</button>
                <label className="mr-1.5 ml-auto flex">
                    <input type="checkbox" defaultChecked aria-label="Включено" className="peer sr-only" />
                    <svg width="16" height="16"><rect x="1.500" y="1.500" width="12" height="12" rx="2" fill="none" stroke="#ddd" strokeWidth="2" /><path d="M4 6l3 4 8-8" stroke="#fff" strokeWidth="2.500" fill="none" /></svg>
                </label>
                <button aria-label="add"><svg width="14" height="14"><circle cx="7" cy="7" r="6" fill="#666" stroke="#aaa" /><path d="M3 7h8M7 3v8" stroke="#fff" strokeWidth="1.500" /></svg></button>
            </nav>
            <div className={`flex h-[17px] shrink-0 items-center bg-gradient-to-b from-black to-[#555] pl-[5px] text-[11px] text-gray-100 ${TAHOMA}`}>RIZ2, RTS, M2</div>
            <div className="relative h-[962px] overflow-hidden border-r-[3px] border-b-2 border-l-4 border-black bg-white">
                <table className="-mt-1.5 w-full table-fixed border-separate border-spacing-0 font-['Liberation_Sans',sans-serif] text-[11px]">
                    <colgroup>
                        <col className="w-3" /><col className="w-[35px]" /><col className="w-[35px]" /><col className="w-[38px]" /><col className="w-[93px]" /><col className="w-[68px]" /><col className="w-[46px]" /><col />
                    </colgroup>
                    <tbody>
                        {volumes.map((v, i) => <BookRow key={i} price={143820 - 10 * i} volume={v} />)}
                    </tbody>
                </table>
                <TickChart />
                <button className={`absolute top-[3px] left-1 h-4 w-[114px] border-b border-gray-400 bg-white text-[11px] whitespace-nowrap ${TAHOMA}`}>Настр. кластеров</button>
                <button className={`absolute top-[890px] left-2 h-4 w-[95px] border-r border-b border-gray-400 bg-white pl-[11px] text-left text-[11px] whitespace-nowrap ${TAHOMA}`}>Настр. стакана</button>
                <button className={`absolute top-[910px] left-2 h-4 w-[70px] border-r border-b border-gray-400 bg-white pl-[11px] text-left text-[11px] ${TAHOMA}`}>Кластеры</button>
                <span className="absolute top-[940px] left-0 h-px w-[118px] bg-gray-400" />
                <div className="absolute top-[944px] left-0 flex h-4 w-[118px] gap-[7px] bg-white font-['Liberation_Sans',sans-serif] text-[11px] leading-4">
                    <span className="-ml-0.5">18:30</span><span>18:35</span><span>18:40</span>
                </div>
                <ol className="absolute top-[885px] left-[125px] font-['Liberation_Sans',sans-serif] text-[11px] leading-3">
                    {[20, 35, 50].map((n, i) => (
                        <li key={n} className={`mb-0.5 flex h-[13px] items-center gap-0.5 ${n === 50 ? 'font-bold' : ''}`}><b className={`h-[13px] w-[11px] border border-black text-center ${n === 50 ? '' : 'font-normal'}`}>{i + 1}</b>{n}</li>
                    ))}
                </ol>
                <div className="absolute top-[930px] left-[121px] flex w-[78px] justify-between font-['Liberation_Sans',sans-serif] text-[11px] leading-[14px]">
                    <span className="bg-[#90ee90] px-0.5">72</span><b className="bg-[#90ee90] px-[3px]">67</b>
                </div>
            </div>
        </div>
        <div className="h-2" />
    </section>
);

/* ---------- MetaTrader ---------- */

const rtsPrices: [string, number][] = [['143708', 70], ['143183', 136], ['142923', 169], ['142663', 202], ['142403', 235], ['141878', 301], ['141358', 367], ['141093', 400], ['140833', 433], ['140573', 466]];
const rtsTags: [string, number, string][] = [['143592', 85, '#000'], ['143440', 104, '#000'], ['142160', 265, '#0000e8'], ['141600', 335, '#0000e8']];
const rtsTimes = ['12:20', '13:00', '13:40', '14:20', '15:00', '15:40', '16:20', '17:00', '17:40', '18:20'];

const RtsChart = () => (
    <svg width="804" height="440" viewBox="1105 47 804 440" className={`block shrink-0 bg-[#fffde8] text-[9px] ${TAHOMA}`}>
        <g shapeRendering="crispEdges">
            <path d="M1105 49.500h762.500v420H1105" fill="none" stroke="#000" />
            <line x1="1105" x2="1867" y1="104.500" y2="104.500" stroke="#c0c0c0" />
            <line x1="1105" x2="1867" y1="85.500" y2="85.500" stroke="#000" strokeDasharray="18 9" strokeDashoffset="10" />
            <line x1="1105" x2="1867" y1="266.500" y2="266.500" stroke="#000090" strokeDasharray="18 9" strokeDashoffset="10" />
            <line x1="1105" x2="1867" y1="336.500" y2="336.500" stroke="#000090" strokeDasharray="18 9" strokeDashoffset="10" />
        </g>
        <line x1="1105" x2="1867" y1="286" y2="311" stroke="#0000b0" strokeWidth="2" />
        <g shapeRendering="crispEdges">
            <line x1="1105.500" x2="1105.500" y1="239" y2="248" stroke="#000" />
            <Candles data={rtsCandles} x0={1111} step={8} width={4} />
            <path d="M1773 104.500h5" stroke="#000" />
            {rtsPrices.map(([, y]) => <line key={y} x1="1867" x2="1870" y1={y + 0.5} y2={y + 0.5} stroke="#000" />)}
            {rtsTimes.map((t, i) => <line key={t} x1={1159.5 + 64 * i} x2={1159.5 + 64 * i} y1="469" y2="473" stroke="#000" />)}
            {rtsTags.map(([t, y, c]) => <rect key={t} x="1869" y={y - 6} width="40" height="12" fill={c} />)}
        </g>
        <path d="M1784 50h9l-4.500 5z" fill="#b0b0b0" />
        <text x="1103" y="61">RTS,M5&nbsp; 143440 143440 143440 143440</text>
        {rtsPrices.map(([t, y]) => <text key={t} x="1873" y={y + 3}>{t}</text>)}
        {rtsTags.map(([t, y]) => <text key={t} x="1873" y={y + 3} fill="#fff">{t}</text>)}
        <text x="1144" y="482" textAnchor="end">1 Nov 2012</text>
        {rtsTimes.map((t, i) => <text key={t} x={1159 + 64 * i} y="482">1 Nov {t}</text>)}
    </svg>
);

const micexPrices: [string, number][] = [['1432.90', 528], ['1431.95', 561], ['1431.05', 593], ['1430.10', 627], ['1429.15', 661], ['1428.25', 694], ['1427.30', 727], ['1426.35', 761], ['1425.40', 795], ['1424.45', 829], ['1423.50', 863], ['1422.55', 897], ['1421.60', 931]];
const micexTimes = ['14:27', '14:35', '14:43', '14:51', '14:59', '15:07', '15:15', '15:23', '15:31', '15:39'];

const MicexChart = () => (
    <svg width="804" height="429" viewBox="1105 524 804 429" fill="#fff" className={`block shrink-0 bg-black text-[9px] ${TAHOMA}`}>
        <g shapeRendering="crispEdges">
            <path d="M1105 526.500h760.500v409H1105" fill="none" stroke="#fff" />
            <line x1="1105" x2="1865" y1="599.500" y2="599.500" stroke="#708090" />
            <line x1="1105" x2="1865" y1="731.500" y2="731.500" stroke="#c81818" />
            <Candles data={micexCandles} x0={1108} step={8} width={4} />
            {micexPrices.map(([, y]) => <line key={y} x1="1865" x2="1868" y1={y + 0.5} y2={y + 0.5} stroke="#fff" />)}
            {micexTimes.map((t, i) => <line key={t} x1={1156.5 + 64 * i} x2={1156.5 + 64 * i} y1="935" y2="939" stroke="#fff" />)}
        </g>
        <path d="M1782 527h9l-4.500 5z" fill="#708090" />
        <text x="1103" y="538">MICEX,M1&nbsp; 1430.75 1431.18 1430.64 1430.91</text>
        {micexPrices.map(([t, y]) => <text key={t} x="1871" y={y + 3}>{t}</text>)}
        <rect x="1867" y="593" width="39" height="11" fill="#fff" />
        <text x="1871" y="602" fill="#000">1430.91</text>
        <rect x="1867" y="725" width="39" height="11" fill="#f00" />
        <text x="1871" y="734" fill="#400">1427.21</text>
        <text x="1141" y="948" textAnchor="end">1 Nov 2012</text>
        {micexTimes.map((t, i) => <text key={t} x={1156 + 64 * i} y="948">1 Nov {t}</text>)}
    </svg>
);

const Tabs: React.FC<{ names: string[]; active: string }> = ({ names, active }) => (
    <div className={`flex h-[22px] shrink-0 items-start border-t-2 border-t-black bg-[#f0f0f0] text-[11px] text-[#808080] ${TAHOMA}`}>
        {names.map((n, i) => n === active ? (
            <button key={n} className="-mt-0.5 flex h-[21px] items-center border-x border-b-2 border-black bg-white px-[9px] text-black">{n}</button>
        ) : (
            <button key={n} className={`mt-[3px] h-[14px] w-20 text-center leading-[14px] whitespace-nowrap ${i === 0 ? '-ml-3.5' : ''} ${names[i + 1] === active ? '' : 'border-r border-gray-500'}`}>{n}</button>
        ))}
        <svg width="24" height="8" className="mt-1.5 mr-2 ml-auto"><path d="M5 0v8L1 4zM18 0v8l4-4z" fill="#999" /></svg>
    </div>
);

const MetaTrader = () => (
    <section className="flex min-w-0 flex-1 flex-col overflow-hidden bg-[#d6e3f2]">
        <header className={`flex h-[25px] shrink-0 items-center bg-gradient-to-b from-[#bccadb] to-[#d6e3f2] pl-[7px] text-[12px] text-[#434e5a] ${SEGOE}`}>
            <h2 className="flex-1 pt-0.5 whitespace-nowrap">1182522: MetaTrader 4 - Демо Счет - [fRTS,M5]</h2>
            <div className="flex gap-[3px] pt-0.5">
                <button aria-label="minimize" className={`${capButton} bg-[#cfdcea]`}><svg width="12" height="10"><rect x=".5" y="5.500" width="10" height="3" fill="#fff" stroke="#445" /></svg></button>
                <button aria-label="restore" className={`${capButton} bg-[#cfdcea]`}><svg width="12" height="10"><rect x=".5" y=".5" width="10" height="8" fill="#fff" stroke="#445" /><rect x="3.500" y="3.500" width="4" height="2" fill="#fff" stroke="#445" /></svg></button>
                <button aria-label="close" className={`${capButton} bg-[#cfdcea]`}><svg width="12" height="10"><path d="M2 1l8 8M10 1L2 9" stroke="#445" strokeWidth="4" /><path d="M2 1l8 8M10 1L2 9" stroke="#fff" strokeWidth="2" /></svg></button>
            </div>
        </header>
        <nav className={`flex h-5 shrink-0 items-center bg-[#f0f0f0] text-[11px] text-[#9c9c9c] ${TAHOMA}`}>
            <svg width="5" height="14" className="mr-[9px]"><path d="M0 2h3v10H0" stroke="#4a90d8" fill="#fff" strokeWidth="1.500" /></svg>
            <button className="w-[46px] text-left">Файл</button>
            <button className="w-[38px] text-left">Вид</button>
            <button className="w-[60px] text-left">Вставка</button>
            <button className="w-[61px] text-left">Графики</button>
            <button className="w-[55px] text-left">Сервис</button>
            <button className="w-[44px] text-left">Окно</button>
            <button className="text-left">Справка</button>
            <div className="ml-auto flex gap-px">
                {['M1 8h6', 'M1 4h5v5H1zM3 4V1h5v5H6', 'M1 1l7 8M8 1L1 9'].map(d => (
                    <button key={d} aria-label="child window" className="flex h-[18px] w-[18px] items-center justify-center border border-[#a8bed6] bg-[#dfeaf6]"><svg width="9" height="10"><path d={d} stroke="#6a86a6" strokeWidth="1.500" fill="none" /></svg></button>
                ))}
            </div>
        </nav>
        <div className="h-0.5 shrink-0 border-t border-gray-500 bg-white" />
        <RtsChart />
        <Tabs names={['USDJPY,H1', 'USDCHF,H1', 'GBPUSD,H1', 'EURUSD,M5', 'fRTS,M5', 'fRTS,Daily']} active="fRTS,M5" />
        <div className="h-2 shrink-0" />
        <div className="h-[7px] shrink-0 border-t border-b-2 border-t-gray-700 border-b-gray-500 bg-[#f0f0f0]" />
        <MicexChart />
        <Tabs names={['EURUSD,H4', 'USDCHF,H4', 'GBPUSD,H4', 'USDJPY,H4', '_MICEX,M1']} active="_MICEX,M1" />
        <div className="h-2 shrink-0" />
        <div className="shrink-0 border-t border-gray-700 bg-[#ececf0] pr-4">
            <p className={`h-[17px] border-r border-gray-300 bg-white pr-2 text-right text-[11px] leading-[18px] ${TAHOMA}`}>812 404</p>
            <div className="mt-1.5 h-2 border-t-2 border-gray-500 bg-white" />
        </div>
        <footer className={`mt-0.5 flex flex-1 items-center border-t border-gray-500 bg-[#f1eeee] pt-0.5 text-[11px] ${TAHOMA}`}>
            <span className="flex-1" />
            <span className="w-[199px] border-l border-gray-300 pl-1">Ready</span>
            <span className="w-[84px] border-l border-gray-300 pl-[3px]">40 ms</span>
            <span className="w-[66px] border-l border-gray-300 pl-1">75008U8</span>
            <span className="flex w-[62px] gap-1.5 border-l border-gray-300 pl-1">
                <svg width="14" height="14"><rect width="14" height="14" /><circle cx="7" cy="7" r="4.500" stroke="#0f0" strokeWidth="2" fill="none" /></svg>
                <svg width="14" height="14"><rect width="14" height="14" /><rect x="3" y="6" width="8" height="4" stroke="#0f0" strokeWidth="1.500" fill="none" /></svg>
                <svg width="14" height="14"><rect width="14" height="14" /><path d="M7 2l3 3H4zM3 7h8M3 9.500h8M3 12h8" stroke="#777" fill="#777" /></svg>
            </span>
            <span className="w-[70px] pl-0.5">01.11.2012</span>
            <span className="w-[45px] border-l border-gray-300 pl-0.5">19:45:17</span>
        </footer>
    </section>
);

/* ---------- taskbar ---------- */

const glass = 'w-[58px] border-[#5c7490] bg-gradient-to-br from-[#d4e1ee] to-[#a9c0da]';

const apps: { name: string; frame: string; icon: React.ReactNode }[] = [
    {
        name: 'Chrome', frame: glass,
        icon: <><circle cx="16" cy="16" r="14" fill="#f4c61a" /><path d="M16 16L3.900 9A14 14 0 0 1 28.500 9.500H16z" fill="#e03c31" /><path d="M16 16l-6 3L3.900 9A14 14 0 0 0 15 30l6-11z" fill="#37a446" /><circle cx="16" cy="16" r="6.500" fill="#fff" /><circle cx="16" cy="16" r="5" fill="#3f7fd8" /></>,
    },
    {
        name: 'Remote desktop', frame: 'w-[58px] border-transparent',
        icon: <><path d="M4 4l21-2v17L7 21z" fill="#1020b8" stroke="#8894a8" strokeWidth="1.500" /><path d="M15 3l9-1v9z" fill="#5870e8" /><path d="M2 24l13-2 3 4-13 3z" fill="#d5dae2" stroke="#8894a8" /><circle cx="24" cy="24" r="7" fill="#d8dcd8" stroke="#889" /><path d="M20 21l3.500 2.500L20 26M28 20l-3.500 2.500L28 25" stroke="#2a9a3a" strokeWidth="1.800" fill="none" /></>,
    },
    {
        name: 'ATE', frame: glass,
        icon: <><text x="1" y="12" className="font-['Liberation_Sans',sans-serif] text-[14px] font-bold" fill="#16c816">A</text><text x="10" y="12" className="font-['Liberation_Sans',sans-serif] text-[14px] font-bold" fill="#fff">TE</text><path d="M2 29c1-10 8-14 21-13" stroke="#20d040" strokeWidth="4" strokeDasharray="9 1" fill="none" /><path d="M16 21l6-3v2l9-3-3 4 2 4-8-3v2zM14 29l5-4v2l6-1-3 3 1 3-5-1z" fill="#d01818" /></>,
    },
    {
        name: 'Statistics', frame: glass,
        icon: <><circle cx="16" cy="16" r="14" fill="#1f66b8" stroke="#123f78" /><path d="M6 19h4v5H6zM11.500 16h4v8h-4zM17 12h4v12h-4zM22.500 9h4v14h-4z" fill="#fff" /></>,
    },
    {
        name: 'Ticks', frame: glass,
        icon: <><path d="M14 1h5v15h-5zM8 6h5v10H8zM20 5h5v11h-5zM2 12h5v4H2zM26 10h5v6h-5z" fill="#2f94c4" /><path d="M14 17h5v10h-5zM8 17h5v9H8zM20 17h5v15h-5zM2 17h5v5H2zM26 17h5v5h-5z" fill="#e03a3a" /><path d="M0 6.500h32M0 11.500h32M0 21.500h32M0 26.500h32" stroke="#b9cde2" /></>,
    },
    {
        name: 'Trade terminal', frame: glass,
        icon: <path d="M8 3C3 12 9 25 29 28 14 31 0 20 8 3zM12 2c-3 9 3 20 18 24C14 26 5 12 12 2zM17 2c-2 8 2 16 14 20C19 21 10 12 17 2zM22 2c-2 6 2 11 9 14C22 16 16 9 22 2z" fill="#0c2f66" />,
    },
    {
        name: 'Quotes', frame: glass,
        icon: <><rect x="3" y="1" width="19" height="16" fill="#fff" stroke="#3a78c0" strokeWidth="2" /><rect x="11" y="7" width="20" height="17" fill="#fff" stroke="#3a78c0" strokeWidth="2" /><path d="M14 18l3-7 3 6 3-8 2 9 3-6" stroke="#2a5aa8" fill="none" strokeWidth="1.500" /><path d="M2 31c0-9 14-9 14 0z" fill="#5a9a3a" /><circle cx="9" cy="17" r="5" fill="#e0a868" stroke="#8a5a20" /></>,
    },
    {
        name: 'Skype', frame: glass,
        icon: <><path d="M9 2c3 0 4 1 6 1 8-1 14 6 13 13 3 5 1 12-7 13-3 0-4-1-6-1C7 29 2 22 3 15 0 9 3 2 9 2z" fill="#1aa4e0" /><text x="16" y="24" textAnchor="middle" className="font-['Lato',sans-serif] text-[23px] font-bold" fill="#fff">S</text><circle cx="26" cy="26" r="5.500" fill="#f0a830" stroke="#8a5a10" /><text x="26" y="29" textAnchor="middle" className="text-[9px] font-bold" fill="#222">2</text></>,
    },
    {
        name: 'Привод', frame: 'w-[52px] border-[#5c7490] bg-gradient-to-br from-[#eef5fb] to-[#cfe0f0]',
        icon: <><path d="M0 0h32v32H0z" fill="#0d5fa8" /><path d="M0 0h18L0 22z" fill="#46a846" /><text x="16" y="28" textAnchor="middle" className="font-['Lato',sans-serif] text-[34px] font-black" fill="#fff">A</text></>,
    },
    {
        name: 'Explorer', frame: `ml-1 ${glass}`,
        icon: <><path d="M1 6l8-3 3 4h17v21H1z" fill="#f0d888" stroke="#c8a040" /><path d="M4 9h25v3H4z" fill="#fff" /><path d="M11 3h3v3h-3z" fill="#3a9a4a" /><path d="M17 5h3v3h-3z" fill="#3a78d0" /><path d="M23 7h3v2h-3z" fill="#d83a2a" /><path d="M3 12h27v17H3z" fill="#f8e8a8" /><path d="M6 31V21c0-3 22-3 22 0v10h-4v-8H10v8z" fill="#9fd4ee" stroke="#5aa0c8" /></>,
    },
];

const Grip = () => (
    <span className="h-7 w-1.5 bg-[radial-gradient(circle,#3c4a5c_1px,transparent_1px)] bg-[length:3px_4px]" />
);

const Taskbar = () => (
    <footer className={`flex h-[39px] shrink-0 items-center border-t-2 border-[#43566c] bg-[linear-gradient(90deg,#7f93ad_0px,#8da3bf_60px,#a6bfdb_80px,#a6bfdb_calc(100%-270px),#8093ab_calc(100%-245px),#8093ab_100%)] text-white ${SEGOE}`}>
        <button aria-label="Пуск" className="ml-1.5">
            <svg width="36" height="36" viewBox="0 0 36 36">
                <defs><radialGradient id="orb" cy=".9"><stop offset="0" stopColor="#7fd6f0" /><stop offset="1" stopColor="#1f4f80" /></radialGradient></defs>
                <circle cx="18" cy="18" r="17" fill="url(#orb)" stroke="#23384f" />
                <path d="M9 10c3-2 5-1 8 0l-1 8c-3-1-5-1-8 0z" fill="#e8562a" /><path d="M18 11c3 2 6 1 9 0l-1 8c-3 1-6 1-9-1z" fill="#8cc63f" />
                <path d="M8 19c3-1 5-1 8 0l-1 7c-3-1-5-1-8 0z" fill="#3fa0e0" /><path d="M17 20c3 1 6 1 9 0l-1 7c-4 1-6 1-9-1z" fill="#fbc02d" />
            </svg>
        </button>
        <span className="mr-2.5 ml-3.5 flex"><Grip /></span>
        <div className="flex h-full gap-1">
            {apps.map(a => (
                <button key={a.name} aria-label={a.name} className={`flex h-full items-center justify-center rounded-sm border-x ${a.frame}`}>
                    <svg width="31" height="31" viewBox="0 0 32 32">{a.icon}</svg>
                </button>
            ))}
        </div>
        <div className="ml-auto flex h-full items-center text-[12px]">
            <Grip />
            <span className="mb-1 ml-3 w-7 text-[11px]">EN</span>
            <svg width="9" height="6" className="mr-3"><path d="M4.500 0L9 6H0z" fill="#fff" /></svg>
            <svg width="17" height="18" className="mr-2"><path d="M1.500 1v16" stroke="#fff" strokeWidth="2" /><path d="M3 2h6l1 2h4v7H3z" fill="#fff" stroke="#556" strokeWidth=".5" /><circle cx="11.500" cy="12.500" r="5" fill="#d83020" /><path d="M9.500 10.500l4 4M13.500 10.500l-4 4" stroke="#fff" strokeWidth="1.500" /></svg>
            <svg width="17" height="18" className="mr-2"><rect x="5" y="4" width="11" height="9" fill="#6a7c92" stroke="#fff" strokeWidth="1.500" /><path d="M8 16h7M11 13v3M1 1v4h4V1M3 5v11h3" stroke="#fff" strokeWidth="1.500" fill="none" /></svg>
            <svg width="17" height="16"><path d="M1 5h3l4-4v14l-4-4H1z" fill="#fff" /><path d="M10 5c1.500 2 1.500 4 0 6M12 3c3 3 3 7 0 10" stroke="#fff" fill="none" /></svg>
            <time className="mr-2 ml-2.5 w-[62px] text-center text-[11px] leading-[17px]">20:45<br />01.11.2012</time>
            <button aria-label="show desktop" className="h-full w-1.5 border-l border-gray-700 bg-[#9fb2c8]" />
        </div>
    </footer>
);

export default function App() {
    return (
        <main className="flex h-screen flex-col overflow-hidden bg-[#d6e3f2]">
            <div className="relative flex min-h-0 flex-1 overflow-hidden">
                <div className="w-[725px] shrink-0 overflow-hidden">
                    <ChartWindow title="FDAXZ2: 1 minute : 44 second DEMO" thumb="w-[102px]"><DaxChart /></ChartWindow>
                    <ChartWindow thumb="w-[90px]"><SpChart /></ChartWindow>
                    <FinResult />
                    <Deals />
                </div>
                <OrderBook />
                <MetaTrader />
            </div>
            <Taskbar />
        </main>
    );
}
